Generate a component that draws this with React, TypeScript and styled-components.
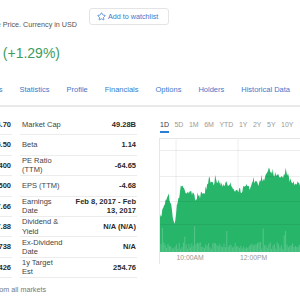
import React from "react";
import styled, { createGlobalStyle } from "styled-components";
import { Star } from "lucide-react";

const GlobalStyle = createGlobalStyle`
  html, body { margin: 0; padding: 0; background: #fff; }
  body { font-family: "Liberation Sans", Arial, sans-serif; color: #333; }
`;

const leftStats = [
  "214.70",
  "215.50",
  "216.95 x 400",
  "217.00 x 500",
  "213.60 - 217.66",
  "141.05 - 257.88",
  "2,784,738",
  "4,116,426",
];

const rightStats = [
  ["Market Cap", "49.28B"],
  ["Beta", "1.14"],
  ["PE Ratio (TTM)", "-64.65"],
  ["EPS (TTM)", "-4.68"],
  ["Earnings Date", "Feb 8, 2017 - Feb 13, 2017"],
  ["Dividend & Yield", "N/A (N/A)"],
  ["Ex-Dividend Date", "N/A"],
  ["1y Target Est", "254.76"],
];

const tabs = ["Conversations", "Statistics", "Profile", "Financials", "Options", "Holders", "Historical Data"];
const ranges = ["1D", "5D", "1M", "6M", "YTD", "1Y", "2Y", "5Y", "10Y"];

// rough shape of the intraday line, page coords
const profile: [number, number][] = [
  [160, 222], [163, 207], [167, 197], [168, 193], [170, 200], [173, 217], [174, 227],
  [176, 213], [178, 200], [182, 185], [183, 188], [187, 192], [190, 190], [193, 195],
  [197, 200], [200, 197], [203, 192], [207, 192], [210, 182], [213, 185], [217, 180],
  [220, 183], [223, 185], [227, 183], [232, 187], [237, 192], [242, 190], [247, 188],
  [250, 187], [255, 183], [260, 183], [265, 177], [268, 170], [272, 175], [277, 173],
  [282, 177], [285, 173], [290, 180], [295, 183], [300, 185], [320, 186],
];

const OX = 159;
const OY = 138;
const BASE = 114;

let seed = 7;
const rnd = () => {
  seed = (seed * 16807) % 2147483647;
  return seed / 2147483647;
};

const yAt = (x: number) => {
  for (let i = 0; i < profile.length - 1; i++) {
    const [x0, y0] = profile[i];
    const [x1, y1] = profile[i + 1];
    if (x >= x0 && x <= x1) return y0 + ((y1 - y0) * (x - x0)) / (x1 - x0);
  }
  return profile[profile.length - 1][1];
};

const buildArea = () => {
  let d = `M1 ${BASE}`;
  for (let x = 160; x <= 320; x += 0.8) {
    let y = yAt(x) + (rnd() - 0.5) * 6;
    if (rnd() > 0.88) y -= 5;
    d += ` L${(x - OX).toFixed(1)} ${(y - OY).toFixed(1)}`;
  }
  return d + ` L161 ${BASE} Z`;
};

const buildVolume = () => {
  const bars: { x: number; h: number }[] = [];
  for (let x = 161; x <= 320; x += 1.4) {
    let h = 3 + rnd() * 7;
    if (rnd() > 0.88) h = 12 + rnd() * 16;
    bars.push({ x: x - OX, h });
  }
  return bars;
};

const areaPath = buildArea();
const volume = buildVolume();

const Page = styled.div`
  width: 300px;
  height: 300px;
  overflow: hidden;
  display: flex;
  flex-direction: column;
`;

const Clip = styled.div<{ $w: number }>`
  width: ${(p) => p.$w}px;
  flex: none;
  display: flex;
  justify-content: flex-end;
  white-space: nowrap;
`;

const Header = styled.div`
  display: flex;
  align-items: center;
  height: 17px;
  margin-top: 8px;
`;

const SubtitleClip = styled(Clip)`
  align-self: flex-end;
  margin-bottom: -4px;
`;

const Subtitle = styled.span`
  font-size: 7.2px;
  color: #555;
`;

const WatchButton = styled.div`
  margin-left: 12px;
  width: 80px;
  height: 17px;
  box-sizing: border-box;
  border: 1px solid #e4e4e4;
  border-radius: 3px;
  display: flex;
  align-items: center;
  gap: 2px;
  padding-left: 7px;
  font-size: 7.2px;
  color: #3b79cc;
  white-space: nowrap;
`;

const PriceRow = styled.div`
  margin-top: 13px;
  display: flex;
`;

const PriceLine = styled(Clip)`
  align-items: baseline;
  line-height: 1;
`;

const Price = styled.span`
  font-size: 24px;
  font-weight: bold;
  color: #222;
`;

const Change = styled.span`
  margin-left: 6px;
  font-size: 14px;
  color: #3d9c61;
`;

const TabsRow = styled.div`
  margin-top: 23px;
  border-bottom: 2px solid #e9e9e9;
  padding-bottom: 10px;
`;

const Tabs = styled(Clip)`
  gap: 17px;
`;

const Tab = styled.span`
  font-size: 7.5px;
  line-height: 10px;
  color: #3b79cc;
`;

const Main = styled.div`
  display: flex;
  margin-top: 8px;
`;

const LeftCol = styled.div`
  display: flex;
  flex-direction: column;
`;

const Tables = styled.div`
  display: flex;
`;

const Table = styled.div<{ $w: number }>`
  width: ${(p) => p.$w}px;
  flex: none;
  display: flex;
  flex-direction: column;
`;

const Row = styled.div`
  height: 20.4px;
  box-sizing: border-box;
  border-bottom: 1px solid #ececec;
  display: flex;
  align-items: center;
  justify-content: space-between;
  font-size: 7.5px;
  line-height: 9.5px;
  padding: 0 1px 0 2px;
`;

const Label = styled.span`
  max-width: 42px;
  color: #444;
`;

const Value = styled.span`
  max-width: 66px;
  text-align: right;
  font-weight: bold;
  color: #2a2a2a;
`;

const RightTable = styled(Table)`
  margin-left: 8px;
`;

const Footnote = styled(Clip)`
  margin-top: 7px;
  font-size: 7.2px;
  color: #777;
`;

const ChartCol = styled.div`
  margin-left: 22px;
  width: 170px;
  flex: none;
  display: flex;
  flex-direction: column;
`;

const Ranges = styled.div`
  display: flex;
  gap: 5.5px;
  padding: 5px 0 0 1px;
`;

const Range = styled.span<{ $active?: boolean }>`
  font-size: 7px;
  line-height: 10px;
  padding-bottom: 1px;
  color: ${(p) => (p.$active ? "#333" : "#999")};
  border-bottom: 2px solid ${(p) => (p.$active ? "#2c7fd6" : "transparent")};
`;

const ChartSvg = styled.svg`
  margin-top: 5px;
  display: block;
`;

const AxisText = styled.text`
  font-family: "Liberation Sans", Arial, sans-serif;
  font-size: 6.8px;
  fill: #999;
`;

export default function App() {
  return (
    <Page>
      <GlobalStyle />
      <Header>
        <SubtitleClip $w={77}>
          <Subtitle>NasdaqGS - NasdaqGS Real Time Price. Currency in USD</Subtitle>
        </SubtitleClip>
        <WatchButton>
          <Star size={9} strokeWidth={2} color="#3b79cc" />
          <span>Add to watchlist</span>
        </WatchButton>
      </Header>

      <PriceRow>
        <PriceLine $w={60}>
          <Price>216.99</Price>
          <Change>+2.77 (+1.29%)</Change>
        </PriceLine>
      </PriceRow>

      <TabsRow>
        <Tabs $w={290}>
          {tabs.map((t) => (
            <Tab key={t}>{t}</Tab>
          ))}
        </Tabs>
      </TabsRow>

      <Main>
        <LeftCol>
          <Tables>
            <Clip $w={12}>
              <Table $w={150}>
                {leftStats.map((v, i) => (
                  <Row key={i}>
                    <Label />
                    <Value>{v}</Value>
                  </Row>
                ))}
              </Table>
            </Clip>
            <RightTable $w={117}>
              {rightStats.map(([l, v]) => (
                <Row key={l}>
                  <Label>{l}</Label>
                  <Value>{v}</Value>
                </Row>
              ))}
            </RightTable>
          </Tables>
          <Footnote $w={46}>Trade prices are not sourced from all markets</Footnote>
        </LeftCol>

        <ChartCol>
          <Ranges>
            {ranges.map((r, i) => (
              <Range key={r} $active={i === 0}>
                {r}
              </Range>
            ))}
          </Ranges>
          <ChartSvg width={170} height={126} viewBox="0 0 170 126">
            <line x1={0.5} y1={0} x2={0.5} y2={126} stroke="#e6e6e6" />
            <line x1={0} y1={0.5} x2={170} y2={0.5} stroke="#e6e6e6" />
            <line x1={17} y1={0} x2={17} y2={BASE} stroke="#eeeeee" />
            <line x1={79} y1={0} x2={79} y2={BASE} stroke="#eeeeee" />
            <path d={areaPath} fill="#27b56a" />
            {volume.map((b, i) => (
              <line
                key={i}
                x1={b.x}
                x2={b.x}
                y1={BASE}
                y2={BASE - b.h}
                stroke="#ffffff"
                strokeOpacity={0.28}
                strokeWidth={0.8}
              />
            ))}
            {[12, 38, 63, 86].map((y) => (
              <line key={y} x1={1} x2={170} y1={y + 0.5} y2={y + 0.5} stroke="#000" strokeOpacity={0.07} />
            ))}
            <AxisText x={17.5} y={121.5}>10:00AM</AxisText>
            <AxisText x={81} y={121.5}>12:00PM</AxisText>
          </ChartSvg>
        </ChartCol>
      </Main>
    </Page>
  );
}
